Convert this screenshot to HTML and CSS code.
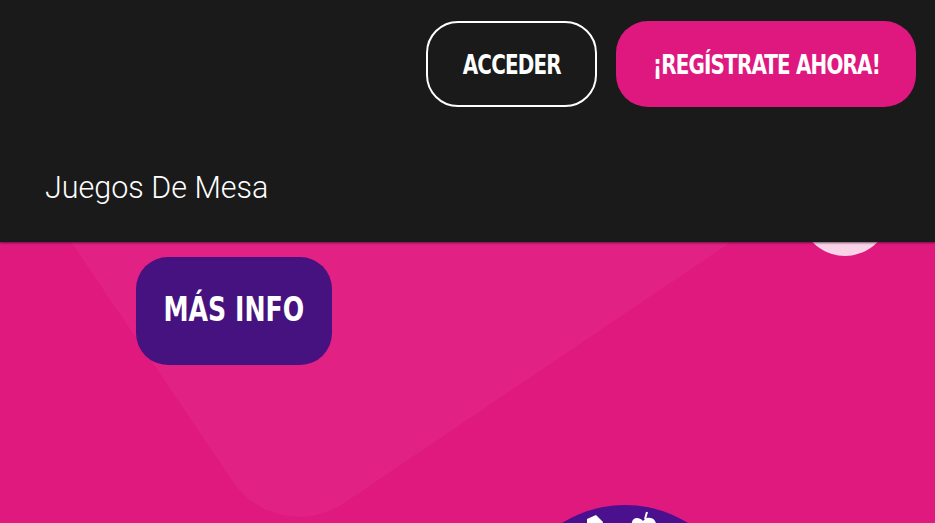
FILE: index.html
```html
<!DOCTYPE html>
<html lang="es">
<head>
<meta charset="utf-8">
<title>Juegos De Mesa</title>
<link rel="stylesheet" href="styles.css">
</head>
<body>
<header class="site-header">
  <div class="topbar">
    <a class="btn btn-outline" href="#"><span class="btn-label">ACCEDER</span></a>
    <a class="btn btn-pink" href="#"><span class="btn-label">¡REGÍSTRATE AHORA!</span></a>
  </div>
  <div class="page-title">Juegos De Mesa</div>
</header>
<section class="hero">
  <div class="deco-square"></div>
  <div class="deco-circle-light"></div>
  <div class="deco-circle-purple">
    <svg class="deco-icons" width="240" height="60" viewBox="0 0 240 60">
      <path d="M82 14 L91 10 L98 17 L95 30 L82 30 Z" fill="#fff"/>
      <path d="M138 16 C132 10 125 14 127 22 C128 27 134 30 138 30 L146 30 C150 27 153 21 150 16 C148 12 142 12 140 14 Z" fill="#fff"/>
      <path d="M140 14 L142 7" stroke="#fff" stroke-width="2"/>
    </svg>
  </div>
  <a class="btn btn-purple" href="#"><span class="btn-label btn-label-lg">MÁS INFO</span></a>
</section>
</body>
</html>
```
FILE: styles.css
```css
html, body {
  margin: 0;
  padding: 0;
}
body {
  width: 935px;
  height: 523px;
  overflow: hidden;
  background: #e0197f;
  font-family: "Roboto", "Liberation Sans", sans-serif;
}
.site-header {
  position: relative;
  z-index: 2;
  height: 242px;
  background: #1a1a1a;
  box-shadow: 0 1px 2px rgba(40, 0, 30, 0.6);
  box-sizing: border-box;
}
.topbar {
  display: flex;
  justify-content: flex-end;
  gap: 19px;
  padding: 21px 19px 0 0;
}
.btn {
  display: flex;
  align-items: center;
  justify-content: center;
  box-sizing: border-box;
  color: #fff;
  text-decoration: none;
  font-family: "DejaVu Sans Condensed", "Liberation Sans", sans-serif;
  font-weight: 700;
  white-space: nowrap;
}
.btn-label {
  display: inline-block;
  transform: scaleX(0.82);
}
.btn-label-lg {
  transform: scaleX(0.85);
}
.btn-outline {
  width: 171px;
  height: 86px;
  border: 2px solid #fff;
  border-radius: 32px;
  font-size: 27px;
  letter-spacing: -1px;
}
.btn-pink {
  width: 300px;
  height: 86px;
  border-radius: 32px;
  background: #de187f;
  font-size: 27px;
  letter-spacing: -1px;
}
.page-title {
  margin: 63px 0 0 45px;
  color: #fff;
  font-family: "Roboto", sans-serif;
  font-weight: 300;
  font-size: 30.5px;
  line-height: 36px;
}
.hero {
  position: relative;
  height: 281px;
  overflow: hidden;
  padding: 15px 0 0 136px;
  box-sizing: border-box;
}
.deco-square {
  position: absolute;
  left: 22px;
  top: -530px;
  width: 700px;
  height: 700px;
  border-radius: 80px;
  background: rgba(255, 255, 255, 0.035);
  transform: rotate(56deg);
}
.deco-circle-light {
  position: absolute;
  left: 800px;
  top: -76px;
  width: 90px;
  height: 90px;
  border-radius: 50%;
  background: #f9d4e8;
}
.deco-circle-purple {
  position: absolute;
  left: 505px;
  top: 263px;
  width: 240px;
  height: 240px;
  border-radius: 50%;
  background: #4a108e;
}
.deco-icons {
  display: block;
}
.btn-purple {
  position: relative;
  width: 196px;
  height: 108px;
  border-radius: 32px;
  background: #46127f;
  font-size: 33px;
  padding-bottom: 4px;
}
```
